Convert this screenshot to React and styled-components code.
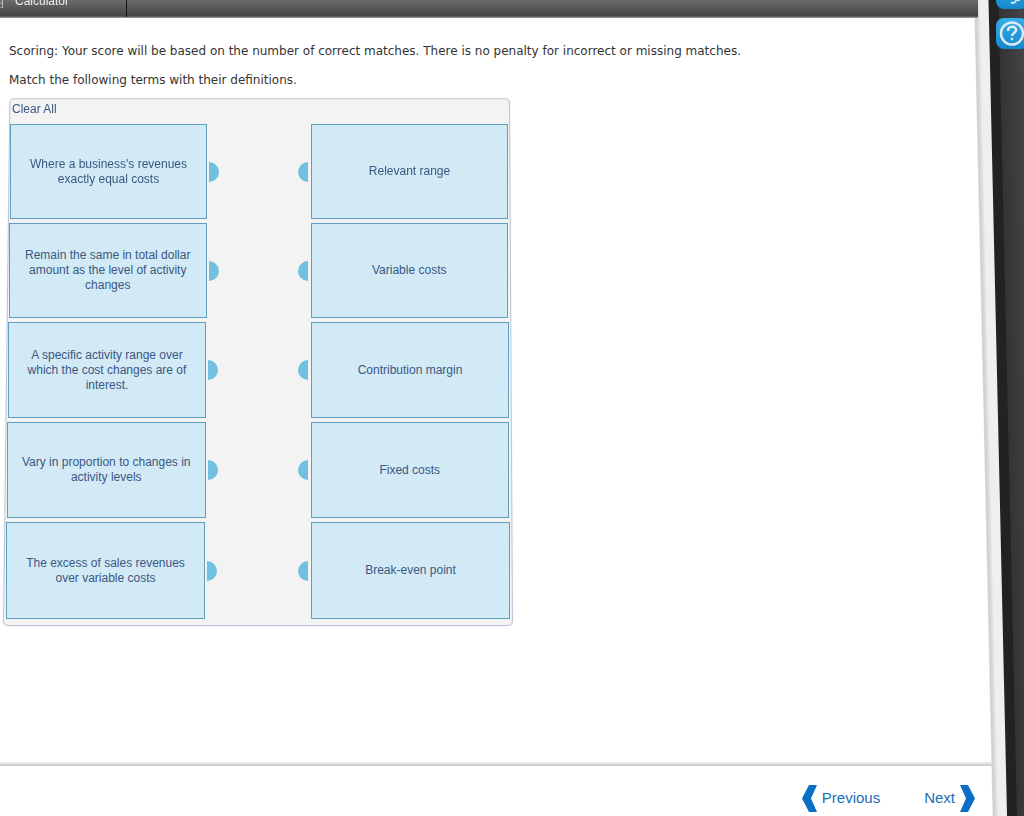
import React from "react";
import styled, { createGlobalStyle } from "styled-components";

const GlobalStyle = createGlobalStyle`
  * {
    box-sizing: border-box;
  }
  body {
    margin: 0;
    background: #fff;
    font-family: "Liberation Sans", Arial, sans-serif;
  }
`;

const Shell = styled.div`
  display: grid;
  grid-template-columns: minmax(0, 1fr) 50px;
  grid-template-rows: auto 1fr auto;
  min-height: 100vh;
  overflow: hidden;
`;

const Toolbar = styled.header`
  grid-column: 1;
  grid-row: 1;
  z-index: 2;
  display: flex;
  height: 18px;
  margin-right: -4px;
  overflow: hidden;
  background: linear-gradient(#6c6c6c, #444 16px, #aaa 18px);
`;

const ToolButton = styled.button`
  display: flex;
  align-items: center;
  gap: 12px;
  width: 127px;
  height: 17px;
  padding: 0 0 15px;
  border: none;
  border-right: 1px solid #111;
  background: none;
  color: #eee;
  font: 12px/12px "Liberation Sans", Arial, sans-serif;
  cursor: pointer;
`;

const CalculatorIcon = styled.svg`
  width: 3px;
  height: 14px;
  flex: none;
`;

const Content = styled.main`
  grid-column: 1;
  grid-row: 2;
  padding: 22px 9px;
`;

const Instruction = styled.p`
  margin: 0 0 7px;
  color: #333;
  font: 12px/22px "DejaVu Sans", Verdana, sans-serif;
`;

const Board = styled.section`
  position: relative;
  width: 510px;
  margin: 0 0 0 -6px;
  padding: 4px 0 7px;

  &::before {
    content: "";
    position: absolute;
    inset: -11px 0 0;
    border: 1px solid #bcc3d2;
    border-radius: 5px;
    background: #f3f3f3;
    box-shadow: 0 0 1px #c4cad6;
    transform: perspective(2000px) rotateX(4deg);
    transform-origin: 68% 100%;
  }
`;

const ClearButton = styled.button`
  position: relative;
  display: block;
  margin: 0 0 7px 9px;
  padding: 0;
  border: none;
  background: none;
  color: #3b5782;
  font: 12px/15px "Liberation Sans", Arial, sans-serif;
  cursor: pointer;
`;

const Rows = styled.div`
  position: relative;
  display: grid;
  gap: 4px;
`;

// the board widens towards the bottom, so each row gets a little more room
const Row = styled.div`
  display: grid;
  grid-template-columns: 1fr 1fr;
  gap: ${({ $index }) => 104 + Math.floor($index / 2)}px;
  height: ${({ $index }) => 95 + Math.floor($index / 2)}px;
  padding-left: ${({ $index }) => 7 - $index}px;
  padding-right: ${({ $index }) => 5 - Math.floor($index / 2)}px;
`;

const Card = styled.button`
  position: relative;
  padding: 0 12px;
  border: 1px solid #5f9fc0;
  background: #d1eaf6;
  color: #3b5782;
  font: 12px/15px "Liberation Sans", Arial, sans-serif;
  text-align: center;
  cursor: pointer;

  &::after {
    content: "";
    position: absolute;
    top: calc(50% - 10px);
    ${({ $side }) => ($side === "left" ? "right: -13px;" : "left: -14px;")}
    width: 10px;
    height: 20px;
    border-radius: ${({ $side }) =>
      $side === "left" ? "0 10px 10px 0" : "10px 0 0 10px"};
    background: #71c0df;
  }
`;

const Footer = styled.footer`
  grid-column: 1 / 3;
  grid-row: 3;
  display: flex;
  justify-content: flex-end;
  gap: 44px;
  height: 55px;
  margin-right: 32px;
  padding: 23px 17px 0 0;
  background: linear-gradient(#fff, #c4c4c4 5px, #fff 5px);
`;

const NavLink = styled.a`
  display: flex;
  align-items: center;
  gap: 5px;
  height: 28px;
  color: #1c6cb8;
  font-size: 15px;
  line-height: 20px;
  text-decoration: none;
`;

const Chevron = styled.svg`
  width: 15px;
  height: 27px;
`;

const Rail = styled.aside`
  position: relative;
  grid-column: 2;
  grid-row: 1 / 4;
  z-index: 1;
  overflow: hidden;

  &::before {
    content: "";
    position: absolute;
    inset: 0 -40px 0 0;
    background: linear-gradient(
      90deg,
      #e4e4e4,
      #cfcfcf 1px,
      #d8d8d8 3px,
      #efefef 6px,
      #efefef 14px,
      #222 15px,
      #222 24px,
      #343434 25px,
      #454545 50px
    );
    transform: skewX(1.3deg);
    transform-origin: 0 0;
  }
`;

const RailButtons = styled.div`
  position: relative;
  display: grid;
  gap: 9px;
  margin: -22px 0 0 22px;
`;

const RailButton = styled.button`
  width: 32px;
  height: 31px;
  padding: 0;
  border: none;
  border-radius: 8px;
  background: linear-gradient(#36aee9, #1488cd);
  cursor: pointer;

  svg {
    display: block;
    width: 32px;
    height: 31px;
  }
`;

const pairs = [
  ["Where a business's revenues exactly equal costs", "Relevant range"],
  [
    "Remain the same in total dollar amount as the level of activity changes",
    "Variable costs",
  ],
  [
    "A specific activity range over which the cost changes are of interest.",
    "Contribution margin",
  ],
  ["Vary in proportion to changes in activity levels", "Fixed costs"],
  ["The excess of sales revenues over variable costs", "Break-even point"],
];

const App = () => {
  return (
    <>
      <GlobalStyle />
      <Shell>
        <Toolbar>
          <ToolButton>
            <CalculatorIcon viewBox="0 0 3 14">
              <path d="M0 1h2.5v13H0M0 9h2" fill="none" stroke="#bbb" />
            </CalculatorIcon>
            Calculator
          </ToolButton>
        </Toolbar>
        <Content>
          <Instruction>
            Scoring: Your score will be based on the number of correct matches.
            There is no penalty for incorrect or missing matches.
          </Instruction>
          <Instruction>
            Match the following terms with their definitions.
          </Instruction>
          <Board>
            <ClearButton>Clear All</ClearButton>
            <Rows>
              {pairs.map(([definition, term], index) => (
                <Row key={term} $index={index}>
                  <Card $side="left">{definition}</Card>
                  <Card $side="right">{term}</Card>
                </Row>
              ))}
            </Rows>
          </Board>
        </Content>
        <Footer>
          <NavLink href="#previous">
            <Chevron viewBox="0 0 15 27">
              <path d="M7 0h8L9 13.5 15 27H7L0 13.5z" fill="#0b6fc6" />
            </Chevron>
            Previous
          </NavLink>
          <NavLink href="#next">
            Next
            <Chevron viewBox="0 0 15 27">
              <path d="M8 0H0l6 13.5L0 27h8l7-13.5z" fill="#0b6fc6" />
            </Chevron>
          </NavLink>
        </Footer>
        <Rail>
          <RailButtons>
            <RailButton aria-label="Hint">
              <svg viewBox="0 0 32 31">
                <path
                  d="M15 24.5c3 1 5 0 5-3M20 22h4"
                  fill="none"
                  stroke="#cfe6f2"
                  strokeWidth="2"
                />
              </svg>
            </RailButton>
            <RailButton aria-label="Help">
              <svg viewBox="0 0 32 31" fill="none" stroke="#dfeaf0">
                <circle cx="16" cy="15.5" r="11" strokeWidth="2.5" />
                <path
                  d="M12 13c0-5.500 8-5.500 8-1 0 3-4 3-4 6"
                  strokeWidth="2.5"
                />
                <circle cx="16" cy="21" r="1" strokeWidth="1" fill="#dfeaf0" />
              </svg>
            </RailButton>
          </RailButtons>
        </Rail>
      </Shell>
    </>
  );
};

export default App;
